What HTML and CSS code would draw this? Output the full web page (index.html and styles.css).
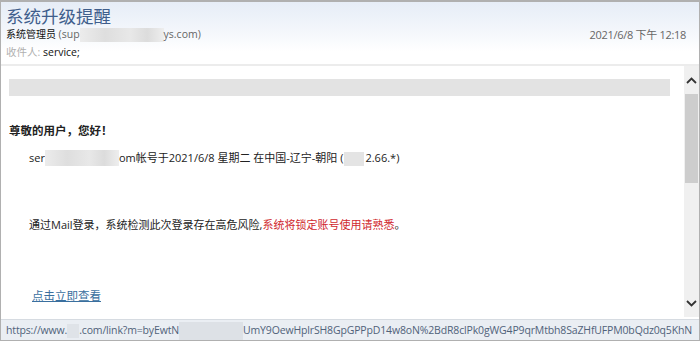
FILE: index.html
```html
<!DOCTYPE html>
<html lang="zh-CN">
<head>
<meta charset="utf-8">
<title>系统升级提醒</title>
<link rel="stylesheet" href="styles.css">
</head>
<body>
<div class="window">
  <header class="header">
    <h1 class="subject">系统升级提醒</h1>
    <div class="meta-row">
      <div class="sender">系统管理员 <span class="addr">(sup<span class="blur blur-sender"></span>ys.com)</span></div>
      <div class="date">2021/6/8 下午 12:18</div>
    </div>
    <div class="to"><span class="to-label">收件人:</span> service;</div>
  </header>
  <div class="main">
    <div class="content">
      <div class="banner"></div>
      <p class="greet">尊敬的用户，您好！</p>
      <p class="line1">ser<span class="blur blur-acct"></span>om帐号于2021/6/8 星期二 在中国-辽宁-朝阳 (<span class="blur blur-ip"></span>2.66.*)</p>
      <p class="line2">通过Mail登录，系统检测此次登录存在高危风险,<span class="red">系统将锁定账号使用请熟悉</span>。</p>
      <a class="link" href="#">点击立即查看</a>
    </div>
    <div class="scrollbar">
      <div class="arrow up"><svg width="11" height="7" viewBox="0 0 11 7"><path d="M1 6 L5.5 1.5 L10 6" fill="none" stroke="#333" stroke-width="1.8"/></svg></div>
      <div class="thumb"></div>
      <div class="track"></div>
      <div class="arrow down"><svg width="11" height="7" viewBox="0 0 11 7"><path d="M1 1 L5.5 5.5 L10 1" fill="none" stroke="#333" stroke-width="1.8"/></svg></div>
    </div>
  </div>
  <footer class="status"><span class="url">https://www.<span class="blur blur-s1"></span>.com/link?m=byEwtN<span class="blur blur-s2"></span>UmY9OewHplrSH8GpGPPpD14w8oN%2BdR8clPk0gWG4P9qrMtbh8SaZHfUFPM0bQdz0q5KhN</span></footer>
</div>
</body>
</html>
```
FILE: styles.css
```css
* { box-sizing: border-box; }
html, body { margin: 0; padding: 0; background: #fff; }
body {
  font-family: "Open Sans", "Noto Sans CJK SC", sans-serif;
  font-size: 11px;
  color: #222;
}
.window {
  width: 700px;
  height: 341px;
  border: 1px solid #b0b0b0;
  border-top-width: 2px;
  display: flex;
  flex-direction: column;
  overflow: hidden;
}
.header {
  height: 64px;
  padding: 2px 13px 0 5px;
  background: linear-gradient(#e6edf7 0%, #f3f6fb 45%, #ffffff 80%);
  border-bottom: 2px solid #ececec;
  flex: none;
}
.subject {
  margin: 0;
  font-size: 17.5px;
  font-weight: normal;
  line-height: 23px;
  color: #3f5e8c;
  font-family: "Noto Sans CJK SC", sans-serif;
}
.meta-row {
  display: flex;
  justify-content: space-between;
  align-items: center;
  line-height: 14px;
}
.sender { color: #111; font-size: 10px; }
.addr { color: #666; font-size: 10.5px; }
.date { color: #666; letter-spacing: -0.3px; margin-top: 1px; }
.blur {
  display: inline-block;
  vertical-align: middle;
  background: linear-gradient(90deg, #ececec, #dedede 30%, #e8e8e8 60%, #dcdcdc 80%, #eeeeee);
}
.blur-sender { width: 84px; height: 14px; }
.to {
  margin-top: 3px;
  line-height: 14px;
  font-size: 10.5px;
  color: #111;
}
.to-label { color: #b0b0b0; }
.main {
  flex: 1;
  display: flex;
  min-height: 0;
}
.content {
  flex: 1;
  padding: 13px 14px 0 8px;
  overflow: hidden;
}
.banner {
  height: 17px;
  background: #e3e3e3;
}
.greet {
  margin: 25px 0 0;
  font-weight: bold;
  font-size: 11.5px;
  line-height: 18px;
  font-family: "Noto Sans CJK SC", sans-serif;
}
.line1 {
  margin: 10px 0 0 20px;
  line-height: 18px;
  color: #222;
}
.blur-acct { width: 74px; height: 16px; margin-top: -2px; }
.blur-ip { width: 20px; height: 14px; background: #e4e4e4; margin: 0 1px; }
.line2 {
  margin: 49px 0 0 20px;
  line-height: 18px;
}
.red { color: #d0282e; }
.link {
  display: inline-block;
  margin: 53px 0 0 23px;
  color: #3a6f9e;
  text-decoration: underline;
  line-height: 18px;
  font-size: 11.5px;
}
.scrollbar {
  width: 15px;
  background: #f0f0f0;
  display: flex;
  flex-direction: column;
  flex: none;
  margin-bottom: 2px;
}
.arrow {
  height: 28px;
  display: flex;
  align-items: center;
  justify-content: center;
}
.thumb {
  height: 89px;
  background: #cdcdcd;
  margin: 0 1px;
}
.track { flex: 1; }
.status {
  flex: none;
  height: 21px;
  line-height: 20px;
  padding-left: 5px;
  background: #eaeef3;
  border-top: 1px solid #d6dbe1;
  color: #50627a;
  font-size: 10.5px;
  white-space: nowrap;
  overflow: hidden;
}
.url { letter-spacing: -0.15px; }
.blur-s1 { width: 12px; height: 14px; background: #dfe3e8; }
.blur-s2 { width: 64px; height: 18px; background: #dde1e6; }
```
